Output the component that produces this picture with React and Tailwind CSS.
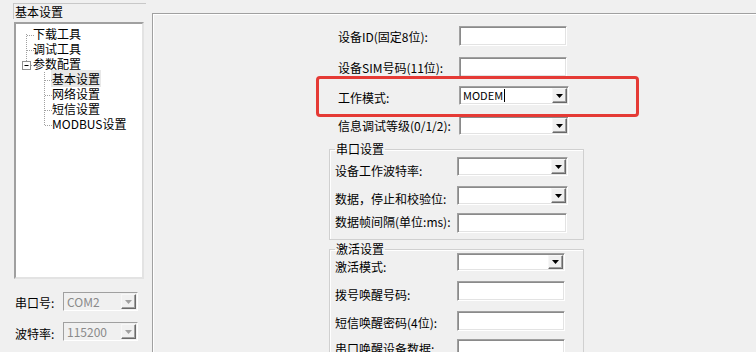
import React from 'react';

const sunken =
  'border border-t-[#a0a0a0] border-l-[#a0a0a0] border-r-white border-b-white shadow-[inset_1px_1px_0_#8a8a8a,inset_-1px_-1px_0_#e3e3e3]';

const Arrow = ({ disabled }) => (
  <div className="w-[15px] h-full bg-[#f0f0f0] border border-t-[#f7f7f7] border-l-[#f7f7f7] border-r-[#696969] border-b-[#696969] shadow-[inset_-1px_-1px_0_#a0a0a0] flex items-center justify-center">
    <svg width="7" height="4" viewBox="0 0 7 4">
      <polygon points="0,0 7,0 3.5,4" fill={disabled ? '#a0a0a0' : '#000'} />
    </svg>
  </div>
);

const Input = ({ w = 'w-[108px]' }) => <div className={`${w} h-[20px] bg-white ${sunken}`} />;

const Select = ({ w = 'w-[110px]', h = 'h-[19px]', value, caret }) => (
  <div className={`${w} ${h} bg-white ${sunken} flex items-stretch justify-between p-[1px]`}>
    <div className="flex items-center pl-[2px] text-[11px] leading-[13px] text-black">
      {value}
      {caret && <span className="inline-block w-[1px] h-[13px] bg-black ml-[1px]" />}
    </div>
    <Arrow />
  </div>
);

const Row = ({ label, offset, lw, mt, children }) => (
  <div className={`flex items-start ${mt}`}>
    <div className={`${lw} ${offset} leading-[12px] whitespace-nowrap text-black`}>{label}</div>
    {children}
  </div>
);

const Group = ({ title, mt, pb, children }) => (
  <fieldset
    className={`${mt} ${pb} ml-[176px] w-[255px] border border-[#d0d0d0] shadow-[inset_1px_1px_0_#fff] pl-[5px]`}
  >
    <legend className="px-[1px] leading-[12px] text-black">{title}</legend>
    {children}
  </fieldset>
);

const TreeLines = () => (
  <svg className="absolute left-0 top-0" width="60" height="110" viewBox="0 0 60 110">
    <g stroke="#a0a0a0" strokeWidth="1" strokeDasharray="1 1" fill="none">
      <line x1="10.5" y1="10" x2="10.5" y2="37" />
      <line x1="11" y1="11.5" x2="18" y2="11.5" />
      <line x1="11" y1="26.5" x2="18" y2="26.5" />
      <line x1="15" y1="41.5" x2="18" y2="41.5" />
      <line x1="28.5" y1="48" x2="28.5" y2="101" />
      <line x1="29" y1="56.5" x2="36" y2="56.5" />
      <line x1="29" y1="71.5" x2="36" y2="71.5" />
      <line x1="29" y1="86.5" x2="36" y2="86.5" />
      <line x1="29" y1="101.5" x2="36" y2="101.5" />
    </g>
    <rect x="6.5" y="37.5" width="8" height="8" fill="#fff" stroke="#919191" />
    <line x1="8.5" y1="41.5" x2="12.5" y2="41.5" stroke="#000" />
  </svg>
);

const DisabledCombo = ({ value }) => (
  <div className={`w-[75px] h-[19px] bg-[#f0f0f0] ${sunken} shadow-none flex items-stretch justify-between p-[1px]`}>
    <div className="flex items-center pl-[2px] text-[12px] text-[#8a8a8a]">{value}</div>
    <Arrow disabled />
  </div>
);

export default function App() {
  return (
    <div className="relative w-[756px] h-[352px] overflow-hidden bg-[#f0f0f0] text-[12px] font-['Noto_Sans_CJK_SC',sans-serif] flex">
      {/* left column */}
      <div className="w-[152px] shrink-0 pl-[13px] pt-[3px] flex flex-col">
        <div className="w-[133px] h-[16px] border-l border-t border-[#c8c8c8] pl-[1px] leading-[16px] text-black">
          基本设置
        </div>
        <div className="relative mt-[3px] ml-[1px] w-[130px] h-[257px] bg-white border-2 border-t-[#a0a0a0] border-l-[#a0a0a0] border-r-[#e3e3e3] border-b-[#e3e3e3] pt-[2px]">
          <TreeLines />
          <div className="leading-[15px] text-black">
            <div className="h-[15px] pl-[17px]">下载工具</div>
            <div className="h-[15px] pl-[17px]">调试工具</div>
            <div className="h-[15px] pl-[17px]">参数配置</div>
            <div className="h-[15px] pl-[35px]">
              <span className="bg-[#e8e8e8] px-[1px]">基本设置</span>
            </div>
            <div className="h-[15px] pl-[36px]">网络设置</div>
            <div className="h-[15px] pl-[36px]">短信设置</div>
            <div className="h-[15px] pl-[36px]">MODBUS设置</div>
          </div>
        </div>
        <div className="flex items-start mt-[13px] ml-[2px]">
          <div className="w-[48px] pt-[5px] leading-[12px]">串口号:</div>
          <DisabledCombo value="COM2" />
        </div>
        <div className="flex items-start mt-[11px] ml-[2px]">
          <div className="w-[48px] pt-[6px] leading-[12px]">波特率:</div>
          <DisabledCombo value="115200" />
        </div>
      </div>

      {/* right column */}
      <div className="flex-1 flex flex-col">
        <div className="h-[1px] bg-[#5a5a5a]" />
        <div className="mt-[13px] flex-1 border-l border-t border-[#a0a0a0] shadow-[inset_1px_1px_0_#fff] flex flex-col">
          <div className="pl-[185px] flex flex-col">
            <Row label="设备ID(固定8位):" lw="w-[121px]" offset="pt-[5px]" mt="mt-[12px]">
              <Input />
            </Row>
            <Row label="设备SIM号码(11位):" lw="w-[121px]" offset="pt-[5px]" mt="mt-[11px]">
              <Input />
            </Row>
            <Row label="工作模式:" lw="w-[121px]" offset="pt-[6px]" mt="mt-[9px]">
              <Select value="MODEM" caret />
            </Row>
            <Row label="信息调试等级(0/1/2):" lw="w-[121px]" offset="pt-[4px]" mt="mt-[11px]">
              <Select />
            </Row>
          </div>

          <Group title="串口设置" mt="mt-[8px]" pb="pb-[6px]">
            <Row label="设备工作波特率:" lw="w-[122px]" offset="pt-[8px]" mt="mt-[2px]">
              <Select w="w-[111px]" />
            </Row>
            <Row label="数据，停止和校验位:" lw="w-[122px]" offset="pt-[7px]" mt="mt-[9px]">
              <Select w="w-[111px]" />
            </Row>
            <Row label="数据帧间隔(单位:ms):" lw="w-[122px]" offset="pt-[3px]" mt="mt-[8px]">
              <Input w="w-[110px]" />
            </Row>
          </Group>

          <Group title="激活设置" mt="mt-[3px]" pb="pb-[6px]">
            <Row label="激活模式:" lw="w-[122px]" offset="pt-[8px]" mt="mt-[-2px]">
              <Select w="w-[108px]" h="h-[18px]" />
            </Row>
            <Row label="拨号唤醒号码:" lw="w-[122px]" offset="pt-[8px]" mt="mt-[8px]">
              <Input />
            </Row>
            <Row label="短信唤醒密码(4位):" lw="w-[122px]" offset="pt-[6px]" mt="mt-[10px]">
              <Input />
            </Row>
            <Row label="串口唤醒设备数据:" lw="w-[122px]" offset="pt-[4px]" mt="mt-[8px]">
              <Input />
            </Row>
          </Group>
        </div>
      </div>

      {/* red highlight annotation */}
      <div className="absolute left-[316px] top-[76px] w-[323px] h-[41px] border-[3px] border-[#e53a35] rounded-[4px] pointer-events-none" />
    </div>
  );
}
